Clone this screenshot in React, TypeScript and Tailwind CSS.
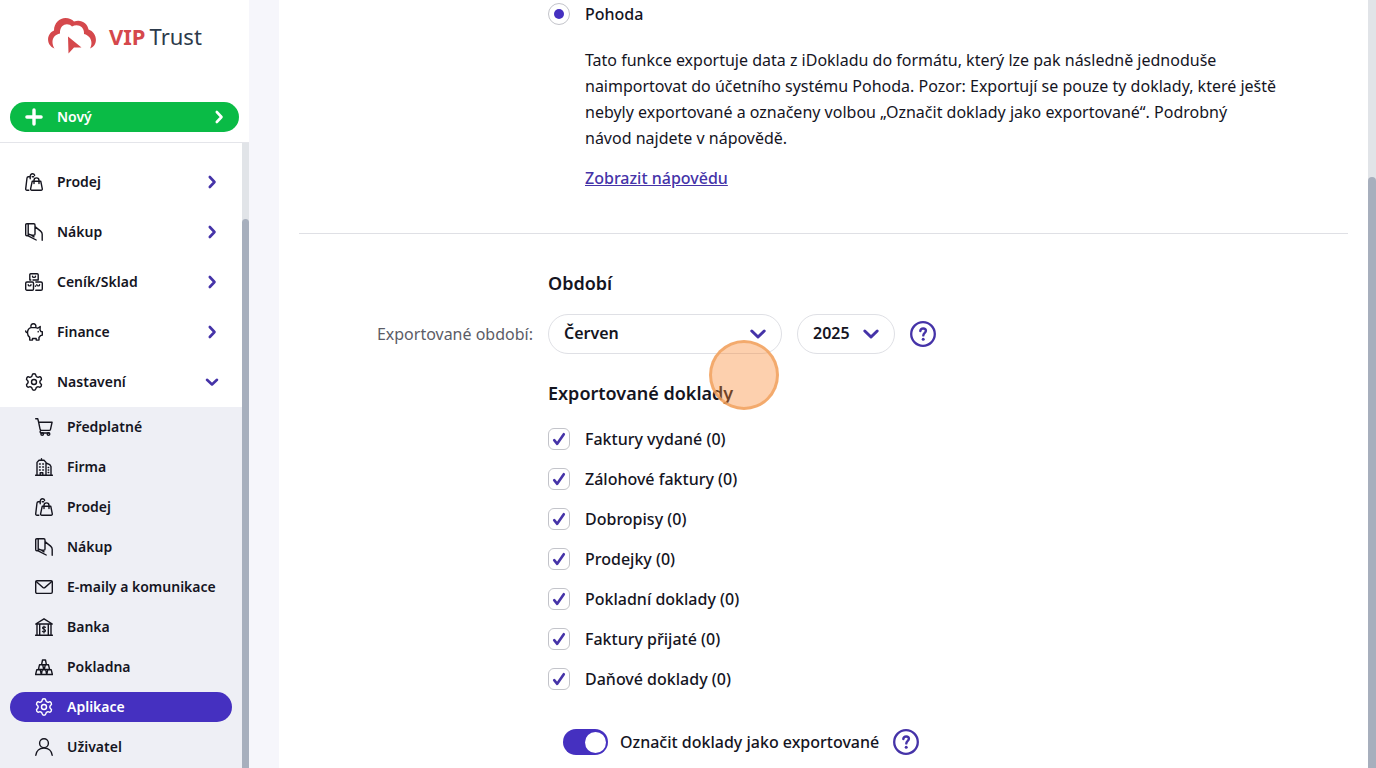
/**
 * Export page
 * Sidebar navigation with the accounting export settings
 */

import type { ReactNode } from 'react';
import { Settings } from 'lucide-react';

function Icon({ children }: { children: ReactNode }) {
  return (
    <svg
      viewBox="0 0 18 18"
      className="w-[18px] h-[18px] shrink-0"
      fill="none"
      stroke="currentColor"
      strokeWidth="1.4"
      strokeLinecap="round"
      strokeLinejoin="round"
      aria-hidden="true"
    >
      {children}
    </svg>
  );
}

function BagsIcon() {
  return (
    <Icon>
      <path d="M3.800 17.300H2c-.9 0-1.400-.6-1.300-1.400L2 5c.1-.8.6-1.200 1.300-1.200h1.500M5.200 5.800V3.400C5.200 1.800 6.200.7 7.500.7s1.800.6 2.100 1.600M7.200 3.800h1.500" />
      <path d="M7.200 8.300h8.600l1.500 7.600c.1.800-.4 1.400-1.200 1.400H6.800c-.8 0-1.300-.6-1.200-1.400l1.600-7.600Z" />
      <path d="M9 10.500V7.400a2.500 2.500 0 0 1 5 0v3.100" />
    </Icon>
  );
}

function PurchaseIcon() {
  return (
    <Icon>
      <path d="M3.200.7h5.600c.7 0 1.200.5 1.200 1.200v9c0 .7-.5 1.200-1.200 1.200H6.500L3.200 11V.7ZM3.200.7H1.800C1.100.7.7 1.200.7 1.800v9.800c0 .7.4 1.200 1.100 1.200h1.400M3.200 11v1.800M10 3.600l5.600 4.500c.9.7 1.600 1.900 1.600 3.100v6M3.200 12.800l8 4.200M6.500 12.100l2.500 1.700" />
    </Icon>
  );
}

function BoxesIcon() {
  return (
    <Icon>
      <path d="M4.8 7V1.8c0-.7.4-1.1 1-1.1h6.4c.6 0 1 .4 1 1.1V7M4.8 7h1M8 7h5.2" />
      <rect x=".7" y="9" width="7.8" height="8.2" rx="1.2" />
      <path d="M10.8 9h5.2c.8 0 1.3.5 1.3 1.2V16c0 .7-.5 1.2-1.3 1.2h-5.2M10.4 13v.2M7.5 3.2c0 1.6 3 1.6 3 0M3.2 11.7c0 1.6 2.8 1.6 2.8 0M11.8 11.7c0 1.6 2.8 1.6 2.8 0" />
    </Icon>
  );
}

function PiggyIcon() {
  return (
    <Icon>
      <path d="M6 4.6h4.3c1 0 1.8.2 2.5.6l2.4-1.7-.2 3.4 1 1.7h1.3v3.6l-1.8.5c-.4.7-.9 1.2-1.5 1.6v2.8h-2.8v-1.6H7.5v1.6H4.7v-2.7C3.2 13.2 2.5 12 2.5 10c0-3 1.4-4.8 3.5-5.4ZM2.6 9.5C1.4 9.5.7 9 .7 8M6.2 4.5C5.2 2.7 6.6.8 8.4.8s3.2 1.9 2.2 3.7" />
      <path d="M13.2 8.5v.4" />
    </Icon>
  );
}

function CartIcon() {
  return (
    <Icon>
      <path d="M.7.8h2.1l.8 3.4h13.5l-1.6 7.1c-.2.8-.6 1.1-1.3 1.1H6.5c-.8 0-1.2-.4-1.4-1.1L3.6 4.2M6 12.4c-1.1.5-1.3 2.4 0 2.6h8" />
      <circle cx="7.2" cy="16" r="1.3" />
      <circle cx="13.5" cy="16" r="1.3" />
    </Icon>
  );
}

function CompanyIcon() {
  return (
    <Icon>
      <path d="M.5 17.3h17M2 17V4.4l2-2.2h5l2 2.2V17M11 5l3.8 1.6 1.2 2V17M6.5 2V.7" />
      <path d="M4.5 6h.8M7.7 6h.8M4.5 9h.8M7.7 9h.8M4.5 12h.8M7.7 12h.8M13.2 9.5h.5M13.2 12h.5M13.2 14.5h.5M5.2 17v-2.3h2.6V17" />
    </Icon>
  );
}

function MailIcon() {
  return (
    <Icon>
      <rect x=".7" y="2.8" width="16.6" height="12.6" rx="1.3" />
      <path d="m1.2 3.4 6.7 6c.7.6 1.5.6 2.2 0l6.7-6" />
    </Icon>
  );
}

function BankIcon() {
  return (
    <Icon>
      <path d="M.7 6 9 .8 17.3 6H.7ZM.5 17.3h17M2 6.2v11M4.7 6.2v11M13.3 6.2v11M16 6.2v11" />
      <path d="M10.5 9.4c-.5-.8-3-.8-3 .7s3 1 3 2.6-2.7 1.5-3.1.5M9 8v7" strokeWidth="1.1" />
    </Icon>
  );
}

function BarsIcon() {
  return (
    <Icon>
      <path d="M7.5 2h3l.9 4.7H6.6L7.5 2ZM4.5 6.8h3.2l1 4.6H3.4l1.1-4.6ZM10.3 6.8h3.2l1.1 4.6H9.3l1-4.6ZM1.8 11.7h3.4l1.1 4.8H.6l1.2-4.8ZM7.3 11.7h3.4l1 4.8H6.3l1-4.8ZM12.8 11.7h3.4l1.2 4.8h-5.7l1.1-4.8Z" />
    </Icon>
  );
}

function UserIcon() {
  return (
    <Icon>
      <circle cx="9" cy="5.2" r="4.4" />
      <path d="M.8 17.3c.4-4.5 3.8-7.3 8.2-7.3s7.8 2.8 8.2 7.3" />
    </Icon>
  );
}

function GearIcon() {
  return <Settings className="w-5 h-5 -mx-px shrink-0" strokeWidth={1.7} aria-hidden="true" />;
}

function Chevron({ down = false, className = '' }: { down?: boolean; className?: string }) {
  return (
    <svg
      viewBox="0 0 18 18"
      className={`w-[18px] h-[18px] shrink-0 ${className}`}
      fill="none"
      stroke="currentColor"
      strokeWidth="2.6"
      strokeLinecap="round"
      strokeLinejoin="round"
      aria-hidden="true"
    >
      <path d={down ? 'm4 6.8 5 4.7 5-4.7' : 'm6.8 4 4.7 5-4.7 5'} />
    </svg>
  );
}

function Logo() {
  return (
    <a href="#" className="flex items-center gap-3 pl-12 pt-4 h-[56px]">
      <svg viewBox="0 0 49 38" className="w-[49px] h-[38px]" aria-hidden="true">
        <path
          d="M6.500 31.500C-2.500 28-1.500 16.500 6 13.500C6 6 11.500 1 17.500 1C21 1 24 2.500 26 4.500C33 2 39.500 6 40.500 12.500C48.500 15 51.500 27.500 42 31.500C45 26 43.500 19 36 17C36.500 9.500 30 6.500 24 9.500C20 5 11.500 7 12 16.500C4.500 18 2.500 25 6.500 31.500Z"
          fill="#d5484c"
        />
        <path d="M20 19.500 33.500 30.500 26 30.500 20.500 36.500Z" fill="#d5484c" />
      </svg>
      <span className="flex gap-1 text-[22px] leading-8 font-normal text-[#2c3a4b]">
        <span className="font-bold text-[#d5484c]">VIP</span>
        <span>Trust</span>
      </span>
    </a>
  );
}

const MENU = [
  { label: 'Prodej', icon: <BagsIcon /> },
  { label: 'Nákup', icon: <PurchaseIcon /> },
  { label: 'Ceník/Sklad', icon: <BoxesIcon /> },
  { label: 'Finance', icon: <PiggyIcon /> },
  { label: 'Nastavení', icon: <GearIcon />, open: true },
];

const SETTINGS_MENU = [
  { label: 'Předplatné', icon: <CartIcon /> },
  { label: 'Firma', icon: <CompanyIcon /> },
  { label: 'Prodej', icon: <BagsIcon /> },
  { label: 'Nákup', icon: <PurchaseIcon /> },
  { label: 'E-maily a komunikace', icon: <MailIcon /> },
  { label: 'Banka', icon: <BankIcon /> },
  { label: 'Pokladna', icon: <BarsIcon /> },
  { label: 'Aplikace', icon: <GearIcon />, active: true },
  { label: 'Uživatel', icon: <UserIcon /> },
];

const DOCUMENTS = [
  'Faktury vydané (0)',
  'Zálohové faktury (0)',
  'Dobropisy (0)',
  'Prodejky (0)',
  'Pokladní doklady (0)',
  'Faktury přijaté (0)',
  'Daňové doklady (0)',
];

function Sidebar() {
  return (
    <aside className="w-[249px] shrink-0 flex flex-col bg-white text-sm font-semibold">
      <div className="h-[143px] shrink-0 border-b border-[#e4e5ea]">
        <Logo />
        <div className="px-2.5 pt-[46px]">
          <button className="flex items-center w-full h-[30px] rounded-full bg-[#0abb46] pl-[15px] pr-[11px] text-white">
            <svg viewBox="0 0 18 18" className="w-[18px] h-[18px]" stroke="currentColor" strokeWidth="3.4" strokeLinecap="round" aria-hidden="true">
              <path d="M9 1.900v14.200M1.900 9h14.200" />
            </svg>
            <span className="ml-3.5 flex-1 text-left">Nový</span>
            <Chevron />
          </button>
        </div>
      </div>
      <div className="flex flex-1 min-h-0">
        <nav className="flex-1 pt-3.5 overflow-hidden">
          {MENU.map((item) => (
            <button key={item.label} className="flex items-center w-full h-[50px] pl-[25px] pr-[21px]">
              {item.icon}
              <span className="ml-3.5 flex-1 text-left">{item.label}</span>
              <Chevron down={item.open} className="text-[#4533a8]" />
            </button>
          ))}
          <div className="bg-[#eeeff5] px-2.5 pb-2.5">
            {SETTINGS_MENU.map((item) => (
              <div key={item.label} className="flex items-center h-10">
                <a
                  href="#"
                  className={`flex items-center gap-3.5 w-full h-[30px] rounded-full pl-[25px] ${item.active ? 'bg-[#4530c0] text-white' : ''}`}
                >
                  {item.icon}
                  <span>{item.label}</span>
                </a>
              </div>
            ))}
          </div>
        </nav>
        <div className="w-[7px] bg-[#e1e4e8] pt-[76px] flex">
          <div className="flex-1 rounded-t-full bg-[#a7afbd]" />
        </div>
      </div>
    </aside>
  );
}

function HelpButton() {
  return (
    <button aria-label="Nápověda" className="w-[26px] h-[26px] shrink-0 text-[#4533a8]">
      <svg viewBox="0 0 26 26" fill="none" stroke="currentColor" aria-hidden="true">
        <circle cx="13" cy="13" r="11.800" strokeWidth="2.300" />
        <path d="M10.300 10c.2-1.600 1.400-2.500 2.900-2.500 1.600 0 2.700.9 2.700 2.300 0 2-2.600 2.100-2.600 4.600" strokeWidth="2.400" strokeLinecap="round" />
        <circle cx="13.200" cy="18.300" r="1.500" fill="currentColor" stroke="none" />
      </svg>
    </button>
  );
}

function Select({ id, label, value, className }: { id: string; label: string; value: string; className: string }) {
  return (
    <div className={`grid items-center ${className}`}>
      <select
        id={id}
        aria-label={label}
        className="col-start-1 row-start-1 appearance-none w-full h-10 rounded-full border border-[#dfe0e5] bg-white pl-[15px] pb-0.5 text-base font-semibold"
      >
        <option>{value}</option>
      </select>
      <svg
        viewBox="0 0 18 18"
        className="col-start-1 row-start-1 justify-self-end mr-[15px] w-[18px] h-[18px] text-[#4533a8] pointer-events-none"
        fill="none"
        stroke="currentColor"
        strokeWidth="3"
        strokeLinecap="round"
        strokeLinejoin="round"
        aria-hidden="true"
      >
        <path d="m2.800 6 6.200 6 6.200-6" />
      </svg>
    </div>
  );
}

function Checkbox({ label }: { label: string }) {
  return (
    <label className="flex items-center gap-[15px] h-10">
      <span className="grid place-items-center">
        <input
          type="checkbox"
          defaultChecked
          className="col-start-1 row-start-1 appearance-none w-[22px] h-[22px] rounded-md border border-[#c3c4ca] bg-white"
        />
        <svg
          viewBox="0 0 14 14"
          className="col-start-1 row-start-1 w-3.5 h-3.5 text-[#4533a8] pointer-events-none"
          fill="none"
          stroke="currentColor"
          strokeWidth="2.600"
          strokeLinecap="round"
          strokeLinejoin="round"
          aria-hidden="true"
        >
          <path d="m2.200 8.200 3 3.600L11.800 2.200" />
        </svg>
      </span>
      <span>{label}</span>
    </label>
  );
}

export default function App() {
  return (
    <div className="flex h-screen overflow-hidden bg-[#f6f6fb] font-['Noto_Sans',sans-serif] font-medium text-[#15151f]">
      <Sidebar />

      <main className="relative flex-1 ml-[30px] bg-white overflow-hidden">
        <section className="mx-5 pl-[249px] pt-[3px] pb-[42px] border-b border-[#dfe0e5]">
          <label className="flex items-center gap-[15px]">
            <span className="grid place-items-center">
              <input
                type="radio"
                name="system"
                defaultChecked
                className="col-start-1 row-start-1 appearance-none w-[22px] h-[22px] rounded-full border border-[#c3c4ca]"
              />
              <span className="col-start-1 row-start-1 w-2.5 h-2.5 rounded-full bg-[#4530c0] pointer-events-none" />
            </span>
            <span className="leading-[22px]">Pohoda</span>
          </label>
          <div className="pl-[37px] pt-[22px] leading-[26px]">
            <p className="max-w-[710px] font-normal">
              Tato funkce exportuje data z iDokladu do formátu, který lze pak následně jednoduše
              <br />
              naimportovat do účetního systému Pohoda. Pozor: Exportují se pouze ty doklady, které ještě
              <br />
              nebyly exportované a označeny volbou „Označit doklady jako exportované“. Podrobný
              <br />
              návod najdete v nápovědě.
            </p>
            <a href="#" className="inline-block mt-3.5 text-[#4533a8] underline">
              Zobrazit nápovědu
            </a>
          </div>
        </section>

        <section className="grid grid-cols-[254px_1fr] gap-x-[15px] pt-[35px]">
          <h2 className="col-start-2 text-lg leading-7 font-semibold">Období</h2>
          <label htmlFor="month" className="mt-[17px] leading-10 text-right font-normal text-[#5c5c66]">
            Exportované období:
          </label>
          <div className="mt-[17px] flex items-center gap-[15px]">
            <Select id="month" label="Exportované období: měsíc" value="Červen" className="w-[234px]" />
            <Select id="year" label="Exportované období: rok" value="2025" className="w-[98px]" />
            <HelpButton />
          </div>

          <div className="col-start-2">
            <h2 className="mt-[25px] mb-3 text-lg leading-7 font-semibold">Exportované doklady</h2>
            {DOCUMENTS.map((label) => (
              <Checkbox key={label} label={label} />
            ))}
            <div className="flex items-center gap-3.5 mt-[30px] pl-[15px]">
              <label className="flex items-center gap-3">
                <span className="grid items-center">
                  <input
                    type="checkbox"
                    role="switch"
                    defaultChecked
                    className="col-start-1 row-start-1 appearance-none w-[45px] h-[26px] rounded-full bg-[#4530c0]"
                  />
                  <span className="col-start-1 row-start-1 justify-self-end mr-0.5 w-[21px] h-[21px] rounded-full bg-white pointer-events-none" />
                </span>
                <span>Označit doklady jako exportované</span>
              </label>
              <HelpButton />
            </div>
          </div>
        </section>

        {/* click highlight */}
        <div className="absolute left-[430px] top-[340px] w-[70px] h-[70px] rounded-full border-[3px] border-[#f0a05c]/80 bg-[#f98a34]/40 pointer-events-none" />
      </main>

      <div className="w-2 shrink-0 bg-[#e1e4e8] pt-[177px] flex">
        <div className="flex-1 rounded-t-full bg-[#a7afbd]" />
      </div>
    </div>
  );
}
